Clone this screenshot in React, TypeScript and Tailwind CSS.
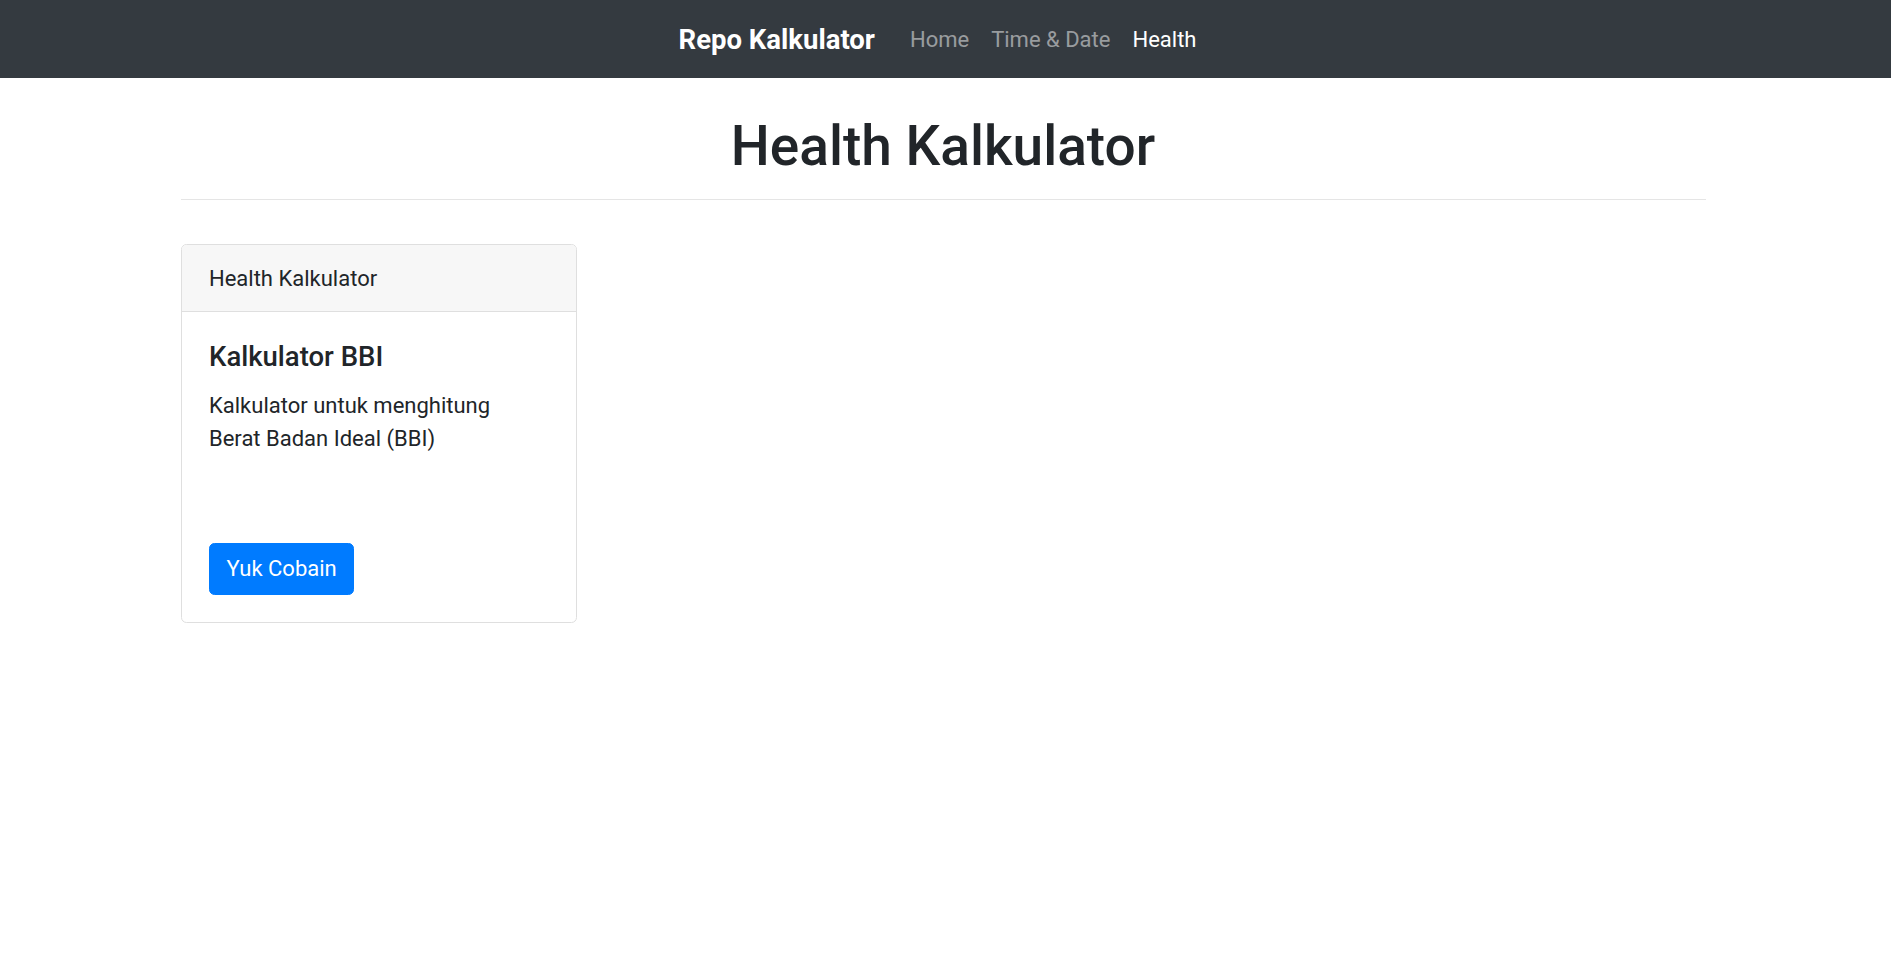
const FONT = "font-['Roboto','Liberation_Sans',sans-serif]";

const navLinks = [
  { label: "Home", active: false },
  { label: "Time & Date", active: false },
  { label: "Health", active: true },
];

function Navbar() {
  return (
    <nav className="flex h-[78px] items-center justify-center bg-[#343a40] pl-[22px] pr-[27px]">
      <a href="#" className="mr-[24px] text-[27.5px] font-bold leading-[41px] text-white">
        Repo Kalkulator
      </a>
      <ul className="flex items-center">
        {navLinks.map((l) => (
          <li key={l.label}>
            <a
              href="#"
              className={`block px-[11px] text-[22px] leading-[33px] ${
                l.active ? "text-white" : "text-white/50"
              }`}
            >
              {l.label}
            </a>
          </li>
        ))}
      </ul>
    </nav>
  );
}

function BbiCard() {
  return (
    <div className="w-[396px] overflow-hidden rounded-[5.5px] border border-[#dfdfdf] bg-white">
      <div className="border-b border-[#dfdfdf] bg-[#f7f7f7] px-[27.5px] py-[16.5px] text-[22px] leading-[33px]">
        Health Kalkulator
      </div>
      <div className="p-[27.5px]">
        <h5 className="mb-[16.5px] text-[27.5px] font-medium leading-[33px]">
          Kalkulator BBI
        </h5>
        <p className="text-[22px] leading-[33px]">
          Kalkulator untuk menghitung
          <br />
          Berat Badan Ideal (BBI)
        </p>
        <a
          href="#"
          className="mt-[88px] inline-block rounded-[5.5px] border border-[#007bff] bg-[#007bff] px-[16.5px] py-[8.25px] text-[22px] leading-[33px] text-white"
        >
          Yuk Cobain
        </a>
      </div>
    </div>
  );
}

export default function App() {
  return (
    <div className={`${FONT} min-h-screen bg-white text-[#212529]`}>
      <Navbar />
      <main className="mx-auto w-[1530px] pr-[5px]">
        <h1 className="pt-[36px] text-center text-[55px] font-medium leading-[64px]">
          Health Kalkulator
        </h1>
        <hr className="mt-[21px] mb-[44px] border-0 border-t border-black/10" />
        <BbiCard />
      </main>
    </div>
  );
}
